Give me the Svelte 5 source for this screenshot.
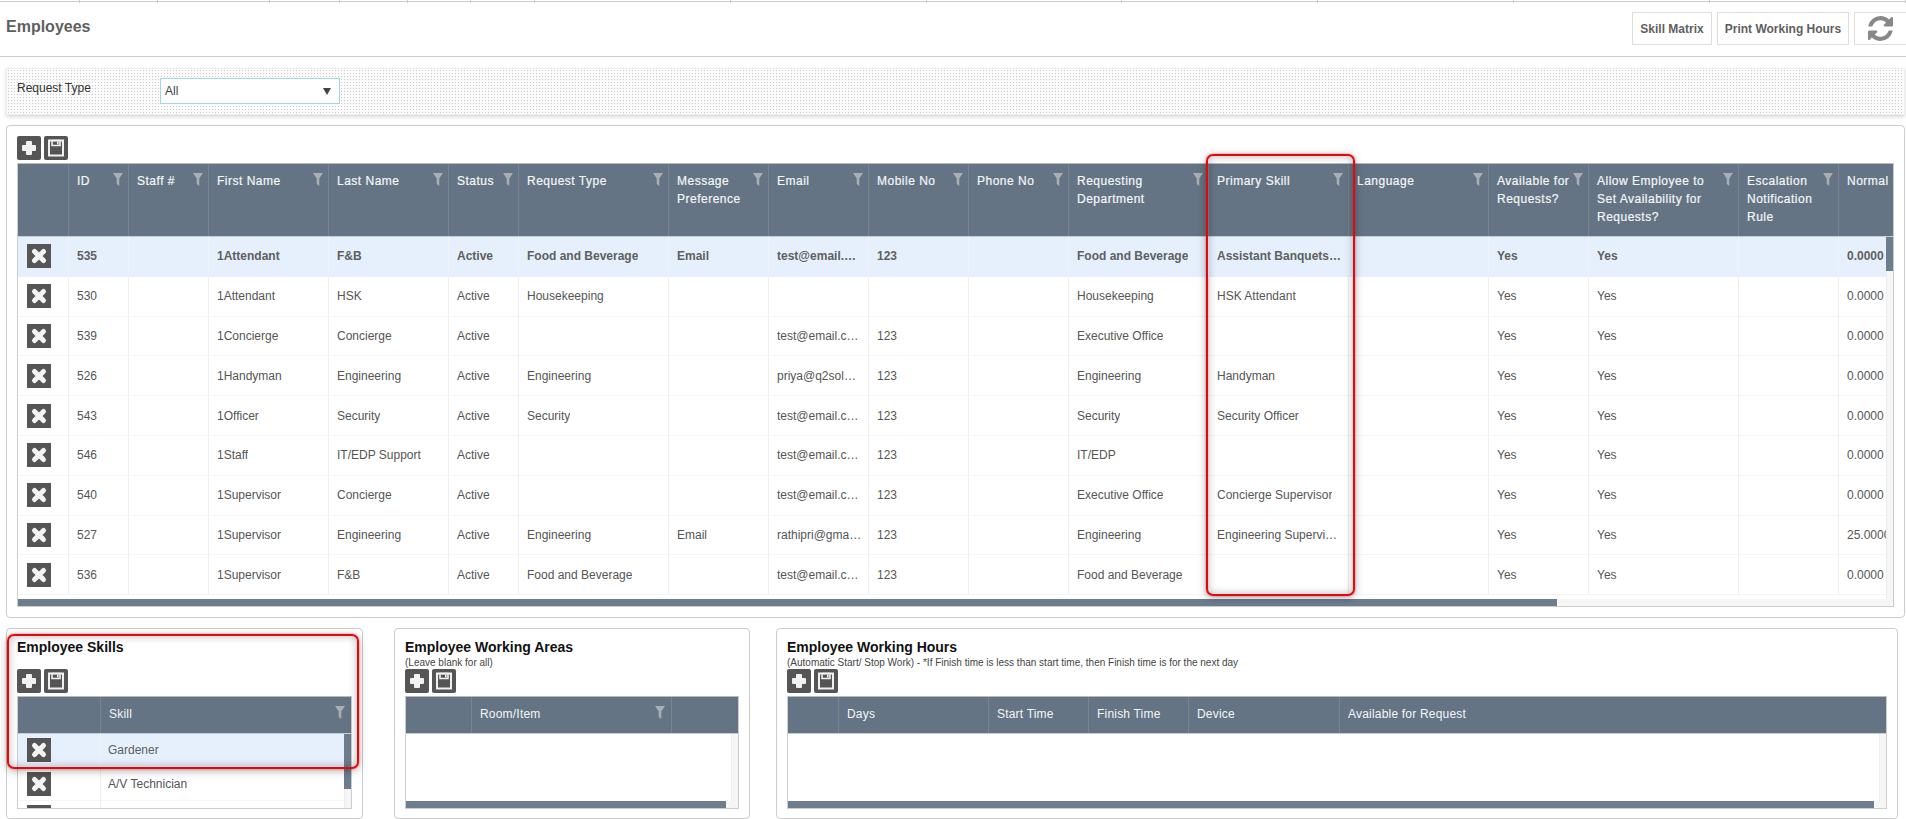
<script>
  const ticks = [82, 79, 115, 71, 69, 65, 65, 200, 200, 200, 200, 200, 200, 200];
  const mainCols = [
    { w: 51, t: '' }, { w: 60, t: 'ID', f: 1 }, { w: 80, t: 'Staff #', f: 1 }, { w: 120, t: 'First Name', f: 1 },
    { w: 120, t: 'Last Name', f: 1 }, { w: 70, t: 'Status', f: 1 }, { w: 150, t: 'Request Type', f: 1 },
    { w: 100, t: 'Message Preference', f: 1 }, { w: 100, t: 'Email', f: 1 }, { w: 100, t: 'Mobile No', f: 1 },
    { w: 100, t: 'Phone No', f: 1 }, { w: 140, t: 'Requesting Department', f: 1 }, { w: 140, t: 'Primary Skill', f: 1 },
    { w: 140, t: 'Language', f: 1 }, { w: 100, t: 'Available for Requests?', f: 1, tight: 1 },
    { w: 150, t: 'Allow Employee to Set Availability for Requests?', f: 1 },
    { w: 100, t: 'Escalation Notification Rule', f: 1 }, { w: 100, t: 'Normal' }
  ];
  const R = (id, first, last, type, msg, email, mobile, dept, skill, normal = '0.0000') =>
    [id, '', first, last, 'Active', type, msg, email, mobile, '', dept, skill, '', 'Yes', 'Yes', '', normal];
  const mainRows = [
    R('535', '1Attendant', 'F&B', 'Food and Beverage', 'Email', 'test@email.com', '123', 'Food and Beverage', 'Assistant Banquets Manager'),
    R('530', '1Attendant', 'HSK', 'Housekeeping', '', '', '', 'Housekeeping', 'HSK Attendant'),
    R('539', '1Concierge', 'Concierge', '', '', 'test@email.com', '123', 'Executive Office', ''),
    R('526', '1Handyman', 'Engineering', 'Engineering', '', 'priya@q2solutions.com', '123', 'Engineering', 'Handyman'),
    R('543', '1Officer', 'Security', 'Security', '', 'test@email.com', '123', 'Security', 'Security Officer'),
    R('546', '1Staff', 'IT/EDP Support', '', '', 'test@email.com', '123', 'IT/EDP', ''),
    R('540', '1Supervisor', 'Concierge', '', '', 'test@email.com', '123', 'Executive Office', 'Concierge Supervisor'),
    R('527', '1Supervisor', 'Engineering', 'Engineering', 'Email', 'rathipri@gmail.com', '123', 'Engineering', 'Engineering Supervisor Lead', '25.00000'),
    R('536', '1Supervisor', 'F&B', 'Food and Beverage', '', 'test@email.com', '123', 'Food and Beverage', '')
  ];
</script>

{#snippet tools()}
  <div class="tools">
    <button class="ico" aria-label="Add">
      <svg viewBox="0 0 24 24" width="24" height="24"><path d="M10 5h4a1 1 0 0 1 1 1v3h3a1 1 0 0 1 1 1v4a1 1 0 0 1-1 1h-3v3a1 1 0 0 1-1 1h-4a1 1 0 0 1-1-1v-3H6a1 1 0 0 1-1-1v-4a1 1 0 0 1 1-1h3V6a1 1 0 0 1 1-1z" fill="#f1f1f1"/></svg>
    </button>
    <button class="ico" aria-label="Save">
      <svg viewBox="0 0 24 24" width="24" height="24"><path d="M5 4.5h14v15H5z" fill="none" stroke="#f1f1f1" stroke-width="2"/><path d="M8 4.5h8v5H8z" fill="none" stroke="#f1f1f1" stroke-width="1.6"/><path d="M13 5.5h1.6v3H13z" fill="#f1f1f1"/></svg>
    </button>
  </div>
{/snippet}

{#snippet del()}
  <span class="ico del">
    <svg viewBox="0 0 24 24" width="24" height="24"><path d="M7.500 7.500l9 9M16.500 7.500l-9 9" stroke="#f4f4f4" stroke-width="5" stroke-linecap="round"/></svg>
  </span>
{/snippet}

{#snippet funnel()}
  <svg class="funnel" viewBox="0 0 10 13" width="10" height="13"><path d="M0 0h10L6.300 5.500V13L3.700 11V5.500z" fill="#a9aeb3"/></svg>
{/snippet}

{#snippet head(cols, h)}
  <div class="ghead" style="height:{h}px">
    {#each cols as c}
      <div class="hcell" class:tight={c.tight} style="width:{c.w}px;flex:{c.grow ? '1 0 0' : 'none'}">
        <span>{c.t}</span>
        {#if c.f}{@render funnel()}{/if}
      </div>
    {/each}
  </div>
{/snippet}

<div class="page">
  <div class="strip">
    {#each ticks as t}<i style="width:{t}px"></i>{/each}
  </div>

  <header class="top">
    <h1>Employees</h1>
    <div class="actions">
      <button class="btn skill">Skill Matrix</button>
      <button class="btn print">Print Working Hours</button>
      <button class="btn refresh" aria-label="Refresh">
        <svg viewBox="0 0 1536 1536" width="25" height="25"><path fill="#888" d="M1511 928q0 5-1 7-64 268-268 434.500t-478 166.500q-146 0-282.500-55t-243.500-157l-129 129q-19 19-45 19t-45-19-19-45v-448q0-26 19-45t45-19h448q26 0 45 19t19 45-19 45l-137 137q71 66 161 102t187 36q134 0 250-65t186-179q11-17 53-117 8-23 30-23h192q13 0 22.500 9.500t9.500 22.500zm25-800v448q0 26-19 45t-45 19h-448q-26 0-45-19t-19-45 19-45l138-138q-148-137-349-137-134 0-250 65t-186 179q-11 17-53 117-8 23-30 23h-199q-13 0-22.500-9.500t-9.500-22.500v-7q65-268 270-434.500t480-166.500q146 0 284 55.500t245 156.500l130-129q19-19 45-19t45 19 19 45z"/></svg>
      </button>
    </div>
  </header>

  <section class="filter">
    <span class="flabel">Request Type</span>
    <div class="select"><span>All</span><i class="caret"></i></div>
  </section>

  <section class="panel main">
    {@render tools()}
    <div class="grid g-main">
      {@render head(mainCols, 72)}
      <div class="gbody">
        {#each mainRows as row, i}
          <div class="row" class:sel={i === 0}>
            <div class="cell first" style="width:51px">{@render del()}</div>
            {#each row as v, j}
              <div class="cell" style="width:{mainCols[j + 1].w}px"><span>{v}</span></div>
            {/each}
          </div>
        {/each}
        <div class="vtrack"><div class="vthumb t34"></div></div>
        <div class="htrack"><div class="hthumb w-main"></div></div>
      </div>
    </div>
    <div class="mark mark-col"></div>
  </section>

  <div class="lower">
    <section class="panel sub skills">
      <div class="phead"><h2>Employee Skills</h2></div>
      {@render tools()}
      <div class="grid small">
        {@render head([{ w: 83, t: '' }, { w: 0, grow: 1, t: 'Skill', f: 1 }], 36)}
        <div class="gbody">
          <div class="srow sel"><div class="cell first" style="width:83px">{@render del()}</div><div class="cell grow"><span>Gardener</span></div></div>
          <div class="srow"><div class="cell first" style="width:83px">{@render del()}</div><div class="cell grow"><span>A/V Technician</span></div></div>
          <div class="srow"><div class="cell first" style="width:83px">{@render del()}</div><div class="cell grow"><span></span></div></div>
          <div class="vtrack"><div class="vthumb t55"></div></div>
        </div>
      </div>
      <div class="mark mark-skill"></div>
    </section>

    <section class="panel sub areas">
      <div class="phead"><h2>Employee Working Areas</h2><small>(Leave blank for all)</small></div>
      {@render tools()}
      <div class="grid small">
        {@render head([{ w: 66, t: '' }, { w: 200, t: 'Room/Item', f: 1 }, { w: 0, grow: 1, t: '' }], 36)}
        <div class="gbody">
          <div class="vtrack"></div>
          <div class="htrack"><div class="hthumb w-area"></div></div>
        </div>
      </div>
    </section>

    <section class="panel sub hours">
      <div class="phead"><h2>Employee Working Hours</h2><small>(Automatic Start/ Stop Work) - *If Finish time is less than start time, then Finish time is for the next day</small></div>
      {@render tools()}
      <div class="grid small">
        {@render head([{ w: 51, t: '' }, { w: 150, t: 'Days' }, { w: 100, t: 'Start Time' }, { w: 100, t: 'Finish Time' }, { w: 151, t: 'Device' }, { w: 0, grow: 1, t: 'Available for Request' }], 36)}
        <div class="gbody">
          <div class="vtrack"></div>
          <div class="htrack"><div class="hthumb w-hours"></div></div>
        </div>
      </div>
    </section>
  </div>
</div>

<style>
  :global(body) { margin: 0; background: #fff; overflow: hidden; }
  .page { width: 1906px; height: 819px; overflow: hidden; font: 12px "Liberation Sans", Arial, sans-serif; color: #555; box-sizing: border-box; }
  .strip { display: flex; height: 1px; border-bottom: 1px solid #ccc; }
  .strip i { display: block; box-sizing: border-box; height: 3px; border-right: 1px solid #ccc; }

  .top { display: flex; justify-content: space-between; height: 54px; box-sizing: content-box; border-bottom: 1px solid #ccc; }
  h1 { margin: 16px 0 0 6px; font-size: 16px; line-height: 18px; font-weight: 700; color: #5f5f5f; }
  .actions { display: flex; gap: 5px; margin-top: 10px; height: 33px; }
  .btn { box-sizing: border-box; height: 33px; border: 1px solid #ddd; background: #fff; color: #5f5f5f; font: 700 12px "Liberation Sans", Arial, sans-serif; padding: 0; display: flex; align-items: center; justify-content: center; }
  .skill { width: 80px; }
  .print { width: 132px; }
  .refresh { width: 52px; border-right: 0; }

  .filter { display: flex; box-sizing: border-box; margin: 11px 0 0 6px; width: 1899px; height: 47px; padding: 9px 10px; border: 1px solid #eee; background: #fbfbfb radial-gradient(circle, #c9c9c9 0.8px, transparent 1px) 0 0 / 3px 3px; box-shadow: 0 2px 4px rgba(0, 0, 0, .16); }
  .flabel { width: 143px; line-height: 18px; margin-top: 1px; color: #333; }
  .select { box-sizing: border-box; width: 180px; height: 26px; border: 1px solid #9fd8de; background: #fff; display: flex; align-items: center; justify-content: space-between; padding: 0 8px 0 4px; color: #444; }
  .caret { width: 0; height: 0; border: 4px solid transparent; border-top: 7px solid #444; border-bottom: 0; }

  .panel { position: relative; box-sizing: border-box; border: 1px solid #ccc; border-radius: 4px; background: #fff; padding: 10px; }
  .main { margin: 10px 0 0 6px; width: 1899px; height: 493px; }
  .tools { display: flex; gap: 3px; height: 24px; margin-bottom: 3px; }
  .ico { display: block; width: 24px; height: 24px; padding: 0; border: 0; border-radius: 2px; background: #555; }
  .ico.del { border-radius: 0; }
  .ico svg { display: block; }

  .grid { box-sizing: border-box; border: 1px solid #ccc; border-top-color: #bbb; display: flex; flex-direction: column; overflow: hidden; }
  .g-main { width: 1877px; height: 444px; }
  .ghead { display: flex; flex: none; background: #647484; border-bottom: 1px solid #c4ccd4; box-sizing: content-box; overflow: hidden; }
  .hcell { position: relative; box-sizing: border-box; flex: none; padding: 8px 8px 0; border-right: 1px solid #76858f; color: #f4f6f8; line-height: 18px; letter-spacing: .2px; white-space: normal; }
  .hcell:last-child { border-right: 0; }
  .funnel { position: absolute; top: 9px; right: 6px; }
  .g-main .hcell { letter-spacing: .5px; padding-right: 18px; -webkit-text-stroke: .2px #f4f6f8; }
  .g-main .hcell.tight { padding-right: 4px; }
  .g-main .funnel { right: 5px; }

  .gbody { position: relative; flex: 1; overflow: hidden; min-height: 0; }
  .row { display: flex; height: 39.8px; width: 1869px; background: #fff; overflow: hidden; }
  .srow { display: flex; height: 33.5px; }
  .cell { box-sizing: border-box; flex: none; display: flex; align-items: center; padding: 0 6px 0 8px; border-right: 1px solid #eee; border-bottom: 1px solid #f5f5f5; min-width: 0; }
  .cell span { overflow: hidden; white-space: nowrap; text-overflow: ellipsis; }
  .cell:last-child { overflow: hidden; }
  .cell.grow { flex: 1; border-right: 0; padding-left: 7px; }
  .cell.first { padding: 0 0 0 9px; }
  .row.sel, .srow.sel { background: #e5f0fc; }
  .sel .cell { font-weight: 700; color: #5f5f5f; border-bottom-color: #e5f0fc; border-right-color: #edf3fb; }
  .srow.sel .cell { font-weight: 400; }

  .vtrack { position: absolute; top: 0; right: 0; bottom: 0; width: 7px; background: #f6f6f6; border-left: 1px solid #eee; box-sizing: border-box; }
  .vthumb { width: 7px; margin-left: -1px; background: #6c7d8e; }
  .t34 { height: 34px; }
  .t55 { height: 55px; }
  .htrack { position: absolute; left: 0; right: 0; bottom: 0; height: 7px; background: #f6f6f6; }
  .hthumb { height: 7px; background: #6c7d8e; }
  .w-main { width: 1539px; }
  .w-area { width: 320px; }
  .w-hours { width: 1086px; }

  .lower { display: flex; margin-top: 10px; }
  .sub { height: 191px; padding: 9px 10px 0; }
  .skills { margin-left: 6px; width: 357px; }
  .areas { margin-left: 31px; width: 356px; }
  .hours { margin-left: 26px; width: 1122px; }
  .phead { height: 31px; color: #000; }
  h2 { margin: 0; font-size: 14px; line-height: 18px; font-weight: 700; color: #111; }
  small { display: block; font-size: 10px; line-height: 13px; color: #444; }
  .small { height: 113px; }

  .mark { position: absolute; box-sizing: border-box; border: 2px solid #e2080f; border-radius: 7px; pointer-events: none; box-shadow: 0 0 2px rgba(255, 0, 0, .6), 0 2px 8px rgba(0, 0, 0, .3), inset 0 0 8px rgba(0, 0, 0, .28); }
  .mark-col { left: 1199px; top: 28px; width: 149px; height: 442px; }
  .mark-skill { left: 0; top: 5px; width: 352px; height: 135px; }
</style>
